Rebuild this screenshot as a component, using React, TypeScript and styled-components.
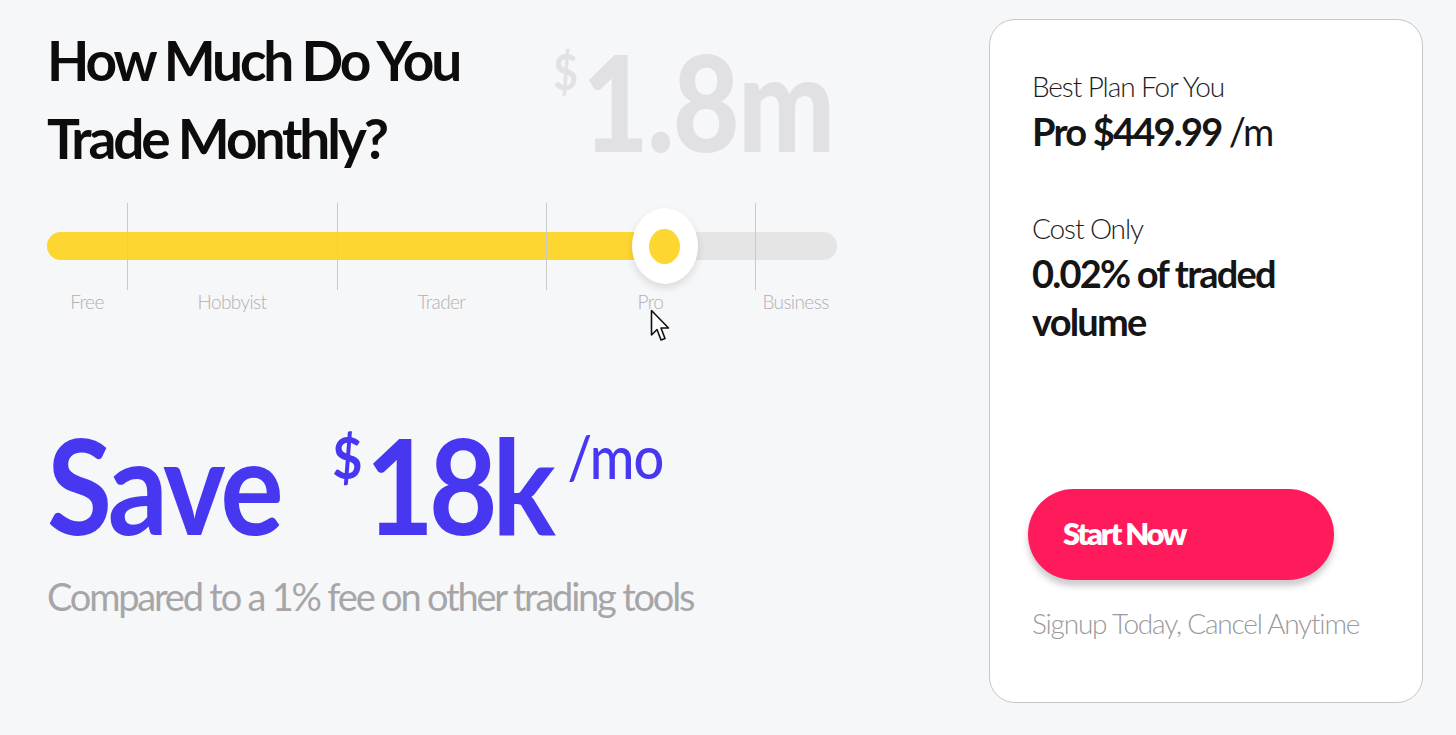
import styled, { createGlobalStyle } from "styled-components";

const GlobalStyle = createGlobalStyle`
    html, body {
        margin: 0;
        padding: 0;
        background: #f6f7f9;
        font-family: Lato, "Open Sans", sans-serif;
    }
`;

const Page = styled.div`
    display: flex;
    justify-content: space-between;
    align-items: flex-start;
    width: 1456px;
    height: 735px;
    box-sizing: border-box;
    padding: 19px 33px 0 47px;
    overflow: hidden;
`;

const Calculator = styled.section`
    width: 790px;
    display: flex;
    flex-direction: column;
`;

const Header = styled.div`
    display: flex;
    justify-content: space-between;
    align-items: flex-start;
`;

const Title = styled.h1`
    margin: 0;
    padding-top: 2px;
    font-size: 55px;
    line-height: 78px;
    font-weight: 700;
    letter-spacing: -3.1px;
    color: #0d0b0b;
`;

const Volume = styled.div`
    display: flex;
    align-items: flex-start;
    margin-right: 4px;
    color: #e1e1e3;
    font-weight: 900;
`;

const VolumeSign = styled.span`
    font-size: 50px;
    line-height: 1;
    margin-top: 27px;
    font-weight: 700;
    color: #e2e2e4;
    display: inline-block;
    transform: scaleX(0.85);
`;

const VolumeValue = styled.span`
    display: inline-block;
    font-size: 134px;
    line-height: 1;
    letter-spacing: -2px;
    margin-top: 15px;
    margin-left: -39px;
    transform: scaleX(0.86);
    transform-origin: right center;
`;

const SliderBlock = styled.div`
    position: relative;
    margin-top: 26px;
`;

const Track = styled.div`
    position: absolute;
    left: 0;
    right: 0;
    top: 29px;
    height: 28px;
    border-radius: 14px;
    background: #e5e5e6;
    overflow: hidden;
`;

const Fill = styled.div`
    height: 100%;
    background: #fed631;
`;

const Thumb = styled.div`
    position: absolute;
    top: 5px;
    width: 66px;
    height: 76px;
    margin-left: -33px;
    border-radius: 50%;
    background: #ffffff;
    box-shadow: 0 4px 8px rgba(0, 0, 0, 0.12);
    display: flex;
    align-items: center;
    justify-content: center;
    z-index: 2;
`;

const ThumbDot = styled.div`
    width: 31px;
    height: 35px;
    border-radius: 50%;
    background: #fed631;
`;

const Stops = styled.div`
    position: relative;
    z-index: 1;
    display: grid;
    grid-template-columns: 80px 210px 209px 209px 1fr;
    width: 789px;
`;

const Stop = styled.div`
    display: flex;
    flex-direction: column;
`;

const StopTick = styled.div<{ $tick: boolean }>`
    height: 87px;
    ${(p) => (p.$tick ? "border-left: 1px solid #c9c9cb;" : "")}
`;

const StopLabel = styled.div`
    text-align: center;
    margin-top: 2px;
    font-size: 19px;
    line-height: 20px;
    font-weight: 300;
    letter-spacing: -0.6px;
    color: #b1b1b3;
`;

const Cursor = styled.svg`
    position: absolute;
    left: 603px;
    top: 106px;
    z-index: 3;
`;

/* the amount row is drawn a little narrower than Lato's natural width */
const Savings = styled.div`
    display: flex;
    align-items: flex-start;
    margin-top: 112px;
    color: #4737f0;
    font-weight: 700;
    transform: scaleX(0.9);
    transform-origin: left top;
`;

const SaveWord = styled.span`
    font-size: 132px;
    line-height: 120px;
    letter-spacing: -4px;
    margin-right: 58px;
`;

const SaveSign = styled.span`
    font-size: 58px;
    line-height: 1;
    margin-top: 4px;
    margin-right: 3px;
`;

const SaveValue = styled.span`
    font-size: 132px;
    line-height: 120px;
    letter-spacing: -6px;
`;

const SaveUnit = styled.span`
    font-size: 60px;
    line-height: 1;
    font-weight: 500;
    margin-left: 19px;
    margin-top: 2px;
    letter-spacing: -1px;
`;

const Compare = styled.p`
    margin: 30px 0 0;
    font-size: 38px;
    line-height: 44px;
    font-weight: 400;
    letter-spacing: -2.2px;
    color: #a6a6a8;
`;

const PlanCard = styled.aside`
    width: 434px;
    height: 684px;
    box-sizing: border-box;
    padding: 49px 30px 0 42px;
    background: #ffffff;
    border: 1.5px solid #c7c7c9;
    border-radius: 26px;
    display: flex;
    flex-direction: column;
`;

const CardLabel = styled.div<{ $gap?: number }>`
    margin-top: ${(p) => p.$gap ?? 0}px;
    font-size: 28px;
    line-height: 34px;
    font-weight: 300;
    letter-spacing: -1.1px;
    color: #1c1c1c;
`;

const CardValue = styled.div`
    margin-top: 4px;
    font-size: 38px;
    line-height: 48px;
    font-weight: 700;
    letter-spacing: -1.8px;
    color: #151515;
`;

const Light = styled.span`
    font-weight: 400;
`;

const StartButton = styled.button`
    margin-top: 144px;
    margin-left: -4px;
    width: 306px;
    height: 91px;
    flex-shrink: 0;
    border: none;
    border-radius: 46px;
    background: #ff1b5b;
    box-shadow: 0 6px 6px rgba(110, 110, 120, 0.35);
    color: #ffffff;
    font-family: Lato, sans-serif;
    font-size: 31px;
    font-weight: 800;
    letter-spacing: -2.2px;
    text-align: left;
    padding: 0 0 4px 35px;
    cursor: pointer;
`;

const Note = styled.div`
    margin-top: 26px;
    font-size: 28px;
    line-height: 34px;
    font-weight: 300;
    letter-spacing: -1.2px;
    color: #9a9a9c;
`;

const stops = ["Free", "Hobbyist", "Trader", "Pro", "Business"];

export default function App() {
    const progress = 617 / 789;
    return (
        <>
            <GlobalStyle />
            <Page>
                <Calculator>
                    <Header>
                        <Title>
                            How Much Do You
                            <br />
                            Trade Monthly?
                        </Title>
                        <Volume>
                            <VolumeSign>$</VolumeSign>
                            <VolumeValue>1.8m</VolumeValue>
                        </Volume>
                    </Header>
                    <SliderBlock>
                        <Track>
                            <Fill style={{ width: `${progress * 100}%` }} />
                        </Track>
                        <Thumb style={{ left: `${progress * 100}%` }}>
                            <ThumbDot />
                        </Thumb>
                        <Stops>
                            {stops.map((s, i) => (
                                <Stop key={s}>
                                    <StopTick $tick={i > 0} />
                                    <StopLabel>{s}</StopLabel>
                                </Stop>
                            ))}
                        </Stops>
                        <Cursor width="20" height="34" viewBox="0 0 20 34">
                            <path
                                d="M1.5 1.5 L1.5 26 L7 20.5 L11 31 L15 29.5 L11 19 L18.5 19 Z"
                                fill="#ffffff"
                                stroke="#111111"
                                strokeWidth="1.6"
                                strokeLinejoin="round"
                            />
                        </Cursor>
                    </SliderBlock>
                    <Savings>
                        <SaveWord>Save</SaveWord>
                        <SaveSign>$</SaveSign>
                        <SaveValue>18k</SaveValue>
                        <SaveUnit>/mo</SaveUnit>
                    </Savings>
                    <Compare>Compared to a 1% fee on other trading tools</Compare>
                </Calculator>
                <PlanCard>
                    <CardLabel>Best Plan For You</CardLabel>
                    <CardValue>
                        Pro $449.99 <Light>/m</Light>
                    </CardValue>
                    <CardLabel $gap={56}>Cost Only</CardLabel>
                    <CardValue>
                        0.02% of traded
                        <br />
                        volume
                    </CardValue>
                    <StartButton>Start Now</StartButton>
                    <Note>Signup Today, Cancel Anytime</Note>
                </PlanCard>
            </Page>
        </>
    );
}
